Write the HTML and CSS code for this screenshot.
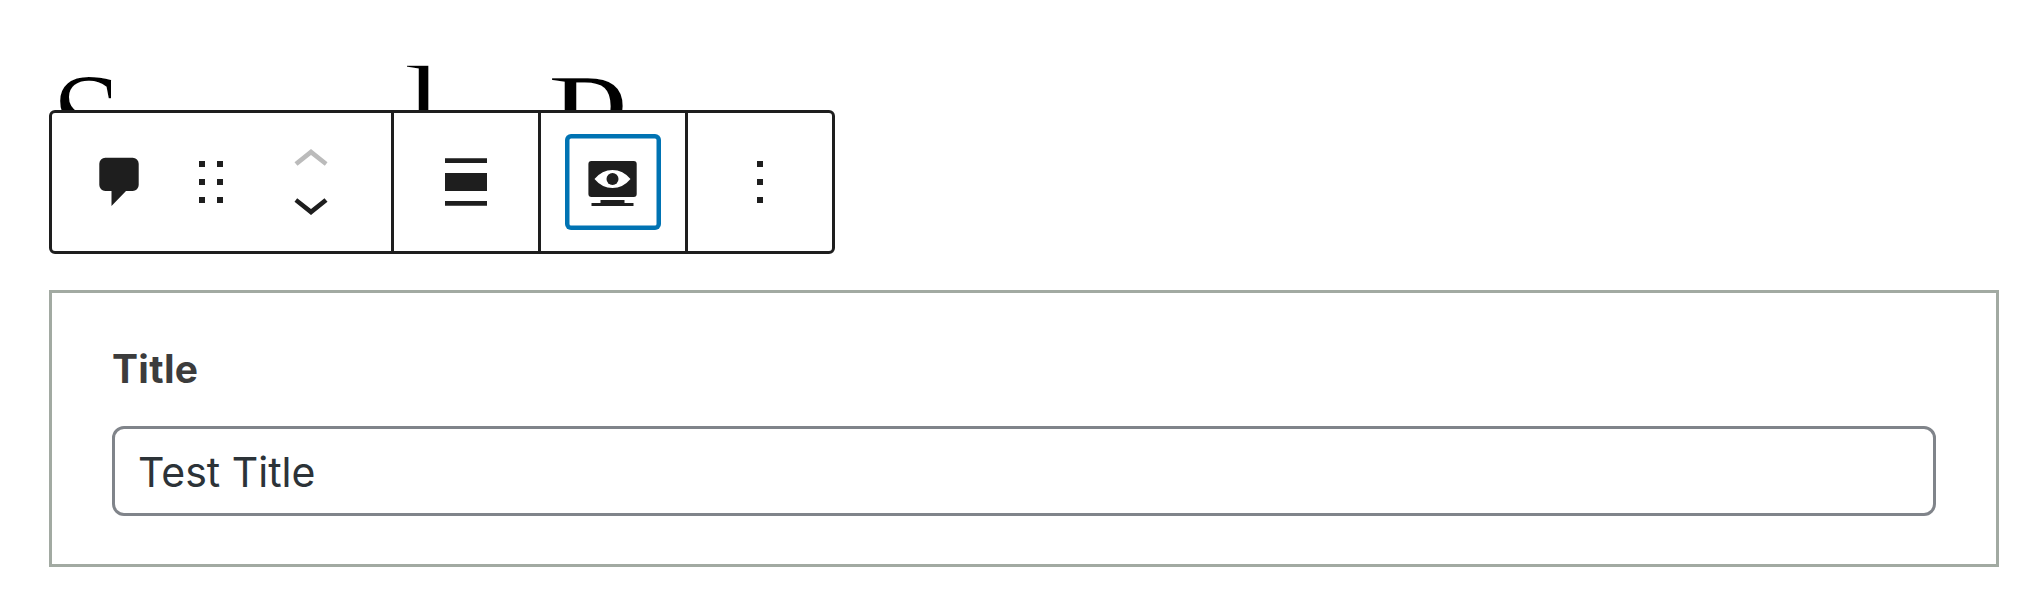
FILE: index.html
```html
<!DOCTYPE html>
<html lang="en">
<head>
<meta charset="utf-8">
<title>Sample Page</title>
<link rel="stylesheet" href="styles.css">
</head>
<body>
<main class="editor">
  <h1 class="page-title"><span class="initial">S</span><span class="lower">amp</span><span class="ascender">l</span><span class="lower">e</span> P<span class="lower tight">age</span></h1>
  <div class="toolbar" role="toolbar">
    <div class="group group-block">
      <button class="tool block-icon" aria-label="Block type">
        <svg width="72" height="72" viewBox="0 0 72 72"><path d="M22.3 11.7h27.4a6 6 0 0 1 6 6v21.300a6 6 0 0 1-6 6H43L28.500 60V45H22.300a6 6 0 0 1-6-6V17.700a6 6 0 0 1 6-6z"/></svg>
      </button>
      <button class="tool drag" aria-label="Drag">
        <svg width="24" height="42" viewBox="0 0 24 42"><path d="M0 0h6v6H0zM18 0h6v6h-6zM0 18h6v6H0zM18 18h6v6h-6zM0 36h6v6H0zM18 36h6v6h-6z"/></svg>
      </button>
      <div class="movers">
        <button class="tool mover disabled" aria-label="Move up">
          <svg width="72" height="42" viewBox="0 4 24 14"><path d="M6.500 12.400L12 8l5.500 4.400-.9 1.200L12 10l-4.500 3.600-1-1.200z"/></svg>
        </button>
        <button class="tool mover" aria-label="Move down">
          <svg width="72" height="42" viewBox="0 6 24 14"><path d="M17.500 11.600L12 16l-5.500-4.400.9-1.200L12 14l4.500-3.600 1 1.200z"/></svg>
        </button>
      </div>
    </div>
    <div class="group">
      <button class="tool" aria-label="Align">
        <svg width="72" height="72" viewBox="0 0 72 72"><path d="M15 12.200h42v4.800H15zM15 27h42v18H15zM15 55h42v4.700H15z"/></svg>
      </button>
    </div>
    <div class="group">
      <button class="tool focused" aria-label="Preview">
        <svg width="72" height="72" viewBox="0 0 72 72"><path fill-rule="evenodd" d="M14.400 15h42.300a3 3 0 0 1 3 3v30a3 3 0 0 1-3 3H14.400a3 3 0 0 1-3-3V18a3 3 0 0 1 3-3zM17.500 33Q25 24 35.500 24T53.500 33Q46 42 35.500 42T17.500 33z"/><circle cx="35.500" cy="33" r="6"/><path d="M23.500 54h24v3h9v3h-42v-3h9z"/></svg>
      </button>
    </div>
    <div class="group">
      <button class="tool" aria-label="Options">
        <svg width="6" height="42" viewBox="0 0 6 42"><path d="M0 0h6v6H0zM0 18h6v6H0zM0 36h6v6H0z"/></svg>
      </button>
    </div>
  </div>
  <section class="panel">
    <label class="field-label" for="title">Title</label>
    <input class="field-input" id="title" type="text" value="Test Title">
  </section>
</main>
</body>
</html>
```
FILE: styles.css
```css
* { box-sizing: border-box; }
body { margin: 0; background: #fff; overflow: hidden; }
.editor { padding: 50px 43px 0 49px; }
.page-title {
  height: 60px;
  margin: 0;
  font: 400 150px/151px "Liberation Serif", serif;
  letter-spacing: 3px;
  word-spacing: -11px;
  color: #000;
  white-space: nowrap;
  -webkit-text-stroke: 2.500px #fff;
}
.initial { display: inline-block; margin-right: 0; transform: scaleX(0.9); transform-origin: 10px 0; }
.lower { line-height: 0; vertical-align: -16px; }
.tight { letter-spacing: -6px; }
.ascender { line-height: 0; vertical-align: 7px; }
.toolbar {
  position: relative;
  z-index: 1;
  display: flex;
  width: 786px;
  height: 144px;
  border: 3px solid #1e1e1e;
  border-radius: 6px;
  background: #fff;
}
.group {
  display: flex;
  flex: 0 0 147px;
  align-items: center;
  justify-content: center;
  border-right: 3px solid #1e1e1e;
}
.group:last-child { flex-basis: 144px; border-right: 0; }
.group-block { flex-basis: 342px; justify-content: flex-start; padding-left: 31px; }
.tool {
  display: flex;
  align-items: center;
  justify-content: center;
  padding: 0;
  border: 0;
  background: none;
}
.tool svg { display: block; fill: #1e1e1e; }
.drag { margin-left: 44px; }
.movers { display: flex; flex-direction: column; gap: 6px; margin-left: 52px; }
.disabled svg { fill: #bbb; }
.focused {
  width: 96px;
  height: 96px;
  border-radius: 6px;
  box-shadow: inset 0 0 0 4.500px #0073b3;
}
.panel {
  height: 277px;
  margin-top: 36px;
  padding: 50px 60px;
  border: 3px solid #a2aaa2;
}
.field-label {
  display: block;
  height: 83px;
  font: 700 39px/52px Inter, sans-serif;
  letter-spacing: 0.3px;
  color: #3c3c3c;
}
.field-input {
  display: block;
  width: 100%;
  height: 90px;
  padding: 1px 23px 0;
  border: 3px solid #80848a;
  border-radius: 12px;
  background: #fff;
  font: 400 41px/84px Inter, sans-serif;
  color: #2c3338;
}
```
